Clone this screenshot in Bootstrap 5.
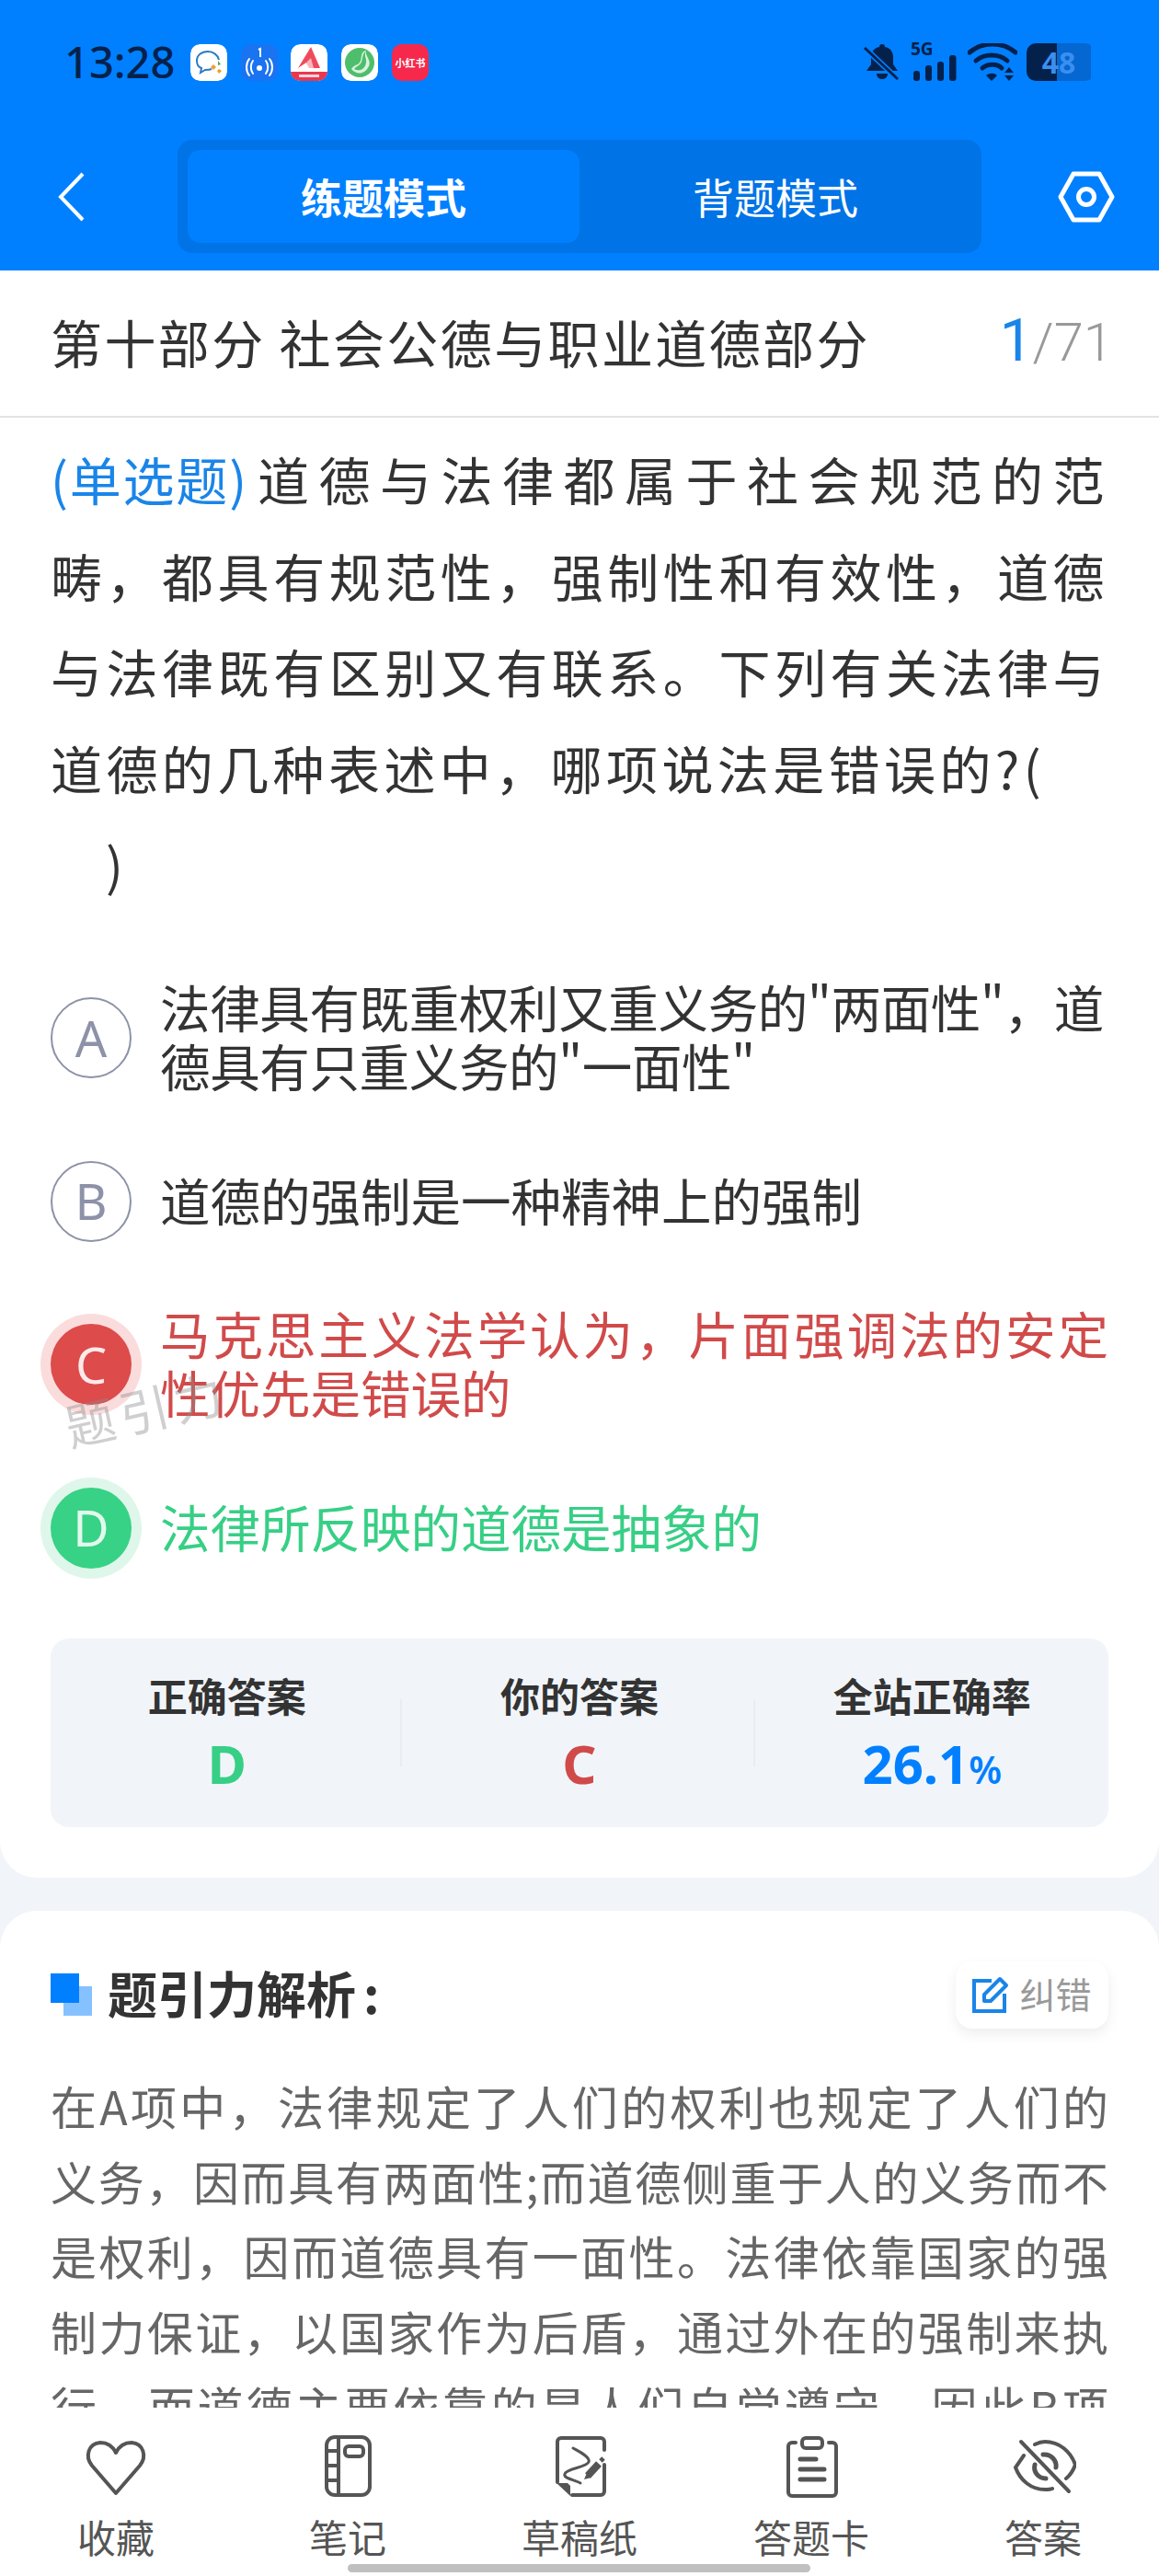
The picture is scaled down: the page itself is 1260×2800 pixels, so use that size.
<!DOCTYPE html>
<html lang="zh-CN">
<head>
  <meta charset="UTF-8">
  <title>题引力</title>
  <link href="https://cdn.jsdelivr.net/npm/bootstrap@5.3.3/dist/css/bootstrap.min.css" rel="stylesheet">
  <style>
    body {
      width: 1260px;
      height: 2800px;
      overflow: hidden;
      background-color: #f1f5f9;
      color: #333;
      font-family: "Noto Sans CJK SC", "Noto Sans", sans-serif;
    }
    .page { height: 2800px; }
    .top-blue { background-color: #0080ff; height: 294px; padding-top: 47px; }
    .status-row { height: 41px; padding: 0 70px 0 70px; }
    .clock { font-family: "Noto Sans", sans-serif; font-size: 47px; font-weight: 500; line-height: 41px; color: #04214c; width: 137px; }
    .app-ico { width: 40px; height: 40px; border-radius: 10px; display: block; margin-right: 14.7px; flex: none; }
    .mode-row { margin-top: 64px; }
    .back-box { width: 193px; padding-left: 62px; }
    .mode-switch { width: 874px; height: 123px; padding: 11px; background-color: #0073e6; border-radius: 16px; }
    .mode-item { width: 426px; border-radius: 14px; color: #fff; font-size: 45px; line-height: 101px; text-align: center; }
    .mode-active { background-color: #0080ff; font-weight: 700; }
    .mode-other { flex: 1; }
    .gear-box { width: 193px; padding-left: 83px; }
    .title-row { height: 160px; background: #fff; border-bottom: 2px solid #e3e3e3; padding: 0 50px 0 55px; }
    .title-text { font-size: 56px; letter-spacing: 2.4px; color: #333; line-height: 1; margin-top: -5px; }
    .progress-num { font-family: Roboto, sans-serif; font-weight: 300; color: #999; font-size: 58px; line-height: 1; margin-top: -5px; }
    .progress-num b { font-weight: 400; color: #1a85e8; font-size: 64px; }
    .first-card { background: #fff; border-radius: 0 0 40px 40px; padding: 14px 55px 55px; }
    .q-line { font-size: 56px; line-height: 104.6px; letter-spacing: 4.4px; color: #333; white-space: nowrap; }
    .q-just { text-align: justify; text-align-last: justify; }
    .q-type { color: #1a85e8; letter-spacing: 1.8px; display: inline-block; margin-right: 4px; }
    .q-pad { padding-left: 60px; height: 106px; line-height: 106px; }
    .opt-list { margin-top: 70px; gap: 69.5px; }
    .opt-row { min-height: 88px; gap: 31px; }
    .opt-dot { width: 88px; height: 88px; margin-top: 2px; margin-bottom: -2px; border-radius: 50%; flex: none; border: 2px solid #8d92a8; color: #8d92a8; font-family: "Noto Sans", sans-serif; font-size: 54px; }
    .opt-wrong { background: #dd4b4b; border: 0; color: #fde9e9; box-shadow: 0 0 0 11px #fbdcdc; }
    .opt-right { background: #37d285; border: 0; color: #e2f9ee; box-shadow: 0 0 0 11px #dff7ea; }
    .opt-text { font-size: 54.5px; line-height: 64px; width: 1031px; white-space: nowrap; color: #333; }
    .opt-tight { letter-spacing: -0.35px; }
    .opt-text-red { color: #d14a4a; }
    .opt-text-green { color: #37cf85; }
    .wm-text { position: absolute; left: 14px; top: 86px; font-size: 54px; line-height: 1; letter-spacing: 6px; color: rgba(140,140,140,.42); transform: rotate(-13deg); white-space: nowrap; pointer-events: none; }
    .stat-box { margin-top: 78px; height: 205px; background: #f1f5f9; border-radius: 20px; padding-top: 36px; }
    .stat-col { flex: 1; position: relative; }
    .stat-col + .stat-col::before { content: ""; position: absolute; left: -3px; top: 30px; height: 73px; border-left: 2px solid #e8edf2; }
    .stat-label { font-size: 43px; font-weight: 700; line-height: 50px; color: #333; }
    .stat-val { font-family: "Noto Sans", sans-serif; font-size: 58px; font-weight: 700; line-height: 72px; margin-top: 14px; }
    .stat-val small { font-size: 41px; font-weight: 600; }
    .second-card { margin-top: 36px; background: #fff; border-radius: 40px 40px 0 0; padding: 55px 55px 0; flex: 1; overflow: hidden; }
    .sq-ico { width: 45px; height: 46px; flex: none; margin-right: 17px; }
    .sec-title { font-size: 54px; font-weight: 700; line-height: 73px; color: #333; margin-top: -5px; }
    .sec-colon { margin-left: 8px; }
    .fix-btn { width: 166px; height: 73px; border-radius: 18px; background: #fff; box-shadow: 0 6px 14px rgba(0,0,0,.07); color: #999; font-size: 39px; gap: 11px; }
    .fix-btn span { margin-top: -4px; }
    .ana-text { margin-top: 43px; color: #666; font-size: 50px; line-height: 81.8px; }
    .ana-line { white-space: nowrap; text-align: justify; text-align-last: justify; }
    .bottom-tabs { height: 183px; background: #fff; position: relative; padding-top: 28px; }
    .tab-item { width: 252px; }
    .tab-item svg { display: block; }
    .tab-name { font-size: 42px; line-height: 50px; margin-top: 15px; color: #555; }
    .home-bar { position: absolute; left: 378px; top: 170px; width: 503px; height: 9px; border-radius: 5px; background: #c0c0c0; }
  </style>
</head>
<body>
<div class="page d-flex flex-column">
  <div class="top-blue flex-shrink-0">
    <div class="status-row d-flex align-items-center">
      <div class="clock">13:28</div>
      <svg class="app-ico" viewBox="0 0 40 40"><rect width="40" height="40" rx="10" fill="#fff"/><path d="M19 8c-7 0-12 4-12 10 0 4 2 7 5 8l-1 5 5-3c2 0 5 0 7-1" fill="none" stroke="#2b7bc8" stroke-width="2"/><path d="M19 8c6 0 11 4 12 9" fill="none" stroke="#2b7bc8" stroke-width="2"/><path d="M30 18l3 4-3 1z" fill="#4aa84f"/><path d="M25 22l3 3-3 3-3-3z" fill="#f0a030"/><path d="M31 27l3 2-3 3-2-3z" fill="#e8a020"/></svg>
      <svg class="app-ico" viewBox="0 0 40 40"><rect width="40" height="40" rx="10" fill="#1a73f0"/><path d="M19 6l2-1v9" fill="none" stroke="#fff" stroke-width="2"/><circle cx="20" cy="26" r="3" fill="#fff"/><path d="M13 19c-3 4-3 10 0 14M27 19c3 4 3 10 0 14M9 17c-4 5-4 13 0 18M31 17c4 5 4 13 0 18" fill="none" stroke="#fff" stroke-width="2" stroke-linecap="round" transform="translate(0 -1)"/></svg>
      <svg class="app-ico" viewBox="0 0 40 40"><rect width="40" height="40" rx="10" fill="#fff"/><path d="M0 30h40v1a9 9 0 0 1-9 9H9a9 9 0 0 1-9-9z" fill="#e8384f"/><path d="M22 3L8 26l9-6 4 6h11z" fill="#ef4a5c"/><path d="M17 20l5-5 3 11h-5z" fill="#f9b4bc"/><rect x="9" y="33" width="22" height="3" fill="#fbd4da"/></svg>
      <svg class="app-ico" viewBox="0 0 40 40"><rect width="40" height="40" rx="10" fill="#fff"/><circle cx="20" cy="20" r="16" fill="#4fbe6c"/><path d="M27 7c-7 1-4 9-7 13-2 3-6 2-9 7 5 6 14 7 19-3 3-7-4-10-3-17z" fill="#d8f3df"/><path d="M27 8c-5 2-3 9-6 13-2 3-5 3-7 6 5 3 12 1 13-7 1-5-3-7 0-12z" fill="#4fbe6c"/></svg>
      <svg class="app-ico" viewBox="0 0 40 40"><rect width="40" height="40" rx="10" fill="#f6294c"/><text x="20" y="25" text-anchor="middle" font-size="11" font-weight="700" fill="#fff" font-family="Noto Sans CJK SC">小红书</text></svg>
      <div class="ms-auto d-flex align-items-center">
        <svg width="40" height="41" viewBox="0 0 40 41"><path d="M20 1c2 0 3 1 3 3 6 1 9 6 9 11v8l5 7H3l5-7v-8c0-5 3-10 9-11 0-2 1-3 3-3z" fill="#04214c"/><path d="M14 33h12c0 4-3 6-6 6s-6-2-6-6z" fill="#04214c"/><path d="M1 5l36 34" stroke="#0080ff" stroke-width="6"/><path d="M1 5l36 34" stroke="#04214c" stroke-width="3"/></svg>
        <div class="position-relative" style="width:52px;height:41px;margin-left:11px"><span class="position-absolute fw-bold" style="left:0;top:-6px;font:700 19px/24px 'Noto Sans',sans-serif;color:#04214c">5G</span><svg class="position-absolute" style="left:2px;top:0" width="48" height="41" viewBox="0 0 48 41"><rect x="1" y="30" width="7" height="11" rx="3" fill="#04214c"/><rect x="14" y="24" width="7" height="17" rx="3" fill="#04214c"/><rect x="27" y="20" width="7" height="21" rx="3" fill="#04214c"/><rect x="40" y="13" width="7.500" height="28" rx="3" fill="#04214c"/></svg></div>
        <svg width="54" height="41" viewBox="0 0 54 41" style="margin-left:10px"><path d="M2 11c14-12 36-12 50 0" fill="none" stroke="#04214c" stroke-width="5" stroke-linecap="round" transform="translate(0 -1)"/><path d="M9 19c9-8 25-8 34 0" fill="none" stroke="#04214c" stroke-width="5" stroke-linecap="round"/><path d="M16 27c6-5 16-5 21 0" fill="none" stroke="#04214c" stroke-width="5" stroke-linecap="round"/><path d="M20 35c4-3 9-3 12 0l-6 6z" fill="#04214c"/><path d="M45 26l5 6H40zM45 41l-5-6h10z" fill="#04214c"/></svg>
        <div class="position-relative d-flex align-items-center justify-content-center" style="width:74px;height:41px;margin-left:10px;color:#3a8ff0;font:700 32px/41px 'Noto Sans',sans-serif;background:linear-gradient(90deg,#04214c 0,#04214c 33px,#0567d1 33px,#0567d1 70px,transparent 70px);border-radius:10px">
          <span style="margin-right:4px">48</span>
        </div>
      </div>
    </div>
    <div class="mode-row d-flex align-items-center">
      <div class="back-box"><svg width="32" height="54" viewBox="0 0 32 54"><path d="M28 2L4 27l24 25" fill="none" stroke="#fff" stroke-width="4"/></svg></div>
      <div class="mode-switch d-flex">
        <div class="mode-item mode-active">练题模式</div>
        <div class="mode-item mode-other">背题模式</div>
      </div>
      <div class="gear-box"><svg width="62" height="56" viewBox="0 0 62 56"><path d="M17 3h28l14 25-14 25H17L3 28z" fill="none" stroke="#fff" stroke-width="5" stroke-linejoin="round"/><circle cx="31" cy="28" r="8.500" fill="none" stroke="#fff" stroke-width="5"/></svg></div>
    </div>
  </div>

  <div class="title-row d-flex align-items-center justify-content-between flex-shrink-0">
    <div class="title-text">第十部分 社会公德与职业道德部分</div>
    <div class="progress-num"><b>1</b>/71</div>
  </div>

  <div class="first-card flex-shrink-0">
    <div class="q-line q-just"><span class="q-type">(单选题)</span>道德与法律都属于社会规范的范</div>
    <div class="q-line q-just">畴，都具有规范性，强制性和有效性，道德</div>
    <div class="q-line q-just">与法律既有区别又有联系。下列有关法律与</div>
    <div class="q-line">道德的几种表述中，哪项说法是错误的?(</div>
    <div class="q-line q-pad">)</div>

    <div class="opt-list d-flex flex-column">
      <div class="opt-row d-flex align-items-center">
        <div class="opt-dot d-flex align-items-center justify-content-center">A</div>
        <div class="opt-text opt-tight"><div>法律具有既重权利又重义务的"两面性"，道</div><div>德具有只重义务的"一面性"</div></div>
      </div>
      <div class="opt-row d-flex align-items-center">
        <div class="opt-dot d-flex align-items-center justify-content-center">B</div>
        <div class="opt-text">道德的强制是一种精神上的强制</div>
      </div>
      <div class="opt-row d-flex align-items-center position-relative">
        <div class="opt-dot opt-wrong d-flex align-items-center justify-content-center">C</div>
        <div class="opt-text opt-text-red"><div class="q-just">马克思主义法学认为，片面强调法的安定</div><div>性优先是错误的</div></div>
        <div class="wm-text">题引力</div>
      </div>
      <div class="opt-row d-flex align-items-center">
        <div class="opt-dot opt-right d-flex align-items-center justify-content-center">D</div>
        <div class="opt-text opt-text-green">法律所反映的道德是抽象的</div>
      </div>
    </div>

    <div class="stat-box d-flex text-center">
      <div class="stat-col">
        <div class="stat-label">正确答案</div>
        <div class="stat-val opt-text-green">D</div>
      </div>
      <div class="stat-col">
        <div class="stat-label">你的答案</div>
        <div class="stat-val opt-text-red">C</div>
      </div>
      <div class="stat-col">
        <div class="stat-label">全站正确率</div>
        <div class="stat-val" style="color:#0080ff">26.1<small>%</small></div>
      </div>
    </div>
  </div>

  <div class="second-card">
    <div class="d-flex align-items-center justify-content-between">
      <div class="d-flex align-items-center">
        <svg class="sq-ico" viewBox="0 0 45 46"><rect x="14" y="14" width="31" height="32" fill="#86c1ff"/><rect width="31" height="32" fill="#0080ff"/></svg>
        <div class="sec-title">题引力解析<span class="sec-colon">:</span></div>
      </div>
      <div class="fix-btn d-flex align-items-center justify-content-center">
        <svg width="40" height="40" viewBox="0 0 40 40"><path d="M21 5H2v33h33V19" fill="none" stroke="#1a85e8" stroke-width="4"/><path d="M13 27V20L30 3l7 7-17 17z" fill="none" stroke="#1a85e8" stroke-width="4" stroke-linejoin="round"/></svg>
        <span>纠错</span>
      </div>
    </div>
    <div class="ana-text">
      <div class="ana-line">在A项中，法律规定了人们的权利也规定了人们的</div>
      <div class="ana-line">义务，因而具有两面性;而道德侧重于人的义务而不</div>
      <div class="ana-line">是权利，因而道德具有一面性。法律依靠国家的强</div>
      <div class="ana-line">制力保证，以国家作为后盾，通过外在的强制来执</div>
      <div class="ana-line">行，而道德主要依靠的是人们自觉遵守，因此B项</div>
    </div>
  </div>

  <div class="bottom-tabs d-flex flex-shrink-0">
    <div class="tab-item d-flex flex-column align-items-center">
      <svg width="72" height="72" viewBox="0 0 72 72" fill="none" stroke="#555" stroke-width="4" stroke-linejoin="round"><path d="M36 65L10 35C2 25 6 11 19 10c8 0 14 5 17 11 3-6 9-11 17-11 13 1 17 15 9 25z"/></svg>
      <div class="tab-name">收藏</div>
    </div>
    <div class="tab-item d-flex flex-column align-items-center">
      <svg width="72" height="72" viewBox="0 0 72 72" fill="none" stroke="#555" stroke-width="4"><rect x="13" y="4" width="47" height="63" rx="9"/><path d="M26 4v63M13 19h13M13 35h13M13 51h13"/><rect x="33" y="14" width="20" height="11" rx="4"/></svg>
      <div class="tab-name">笔记</div>
    </div>
    <div class="tab-item d-flex flex-column align-items-center">
      <svg width="72" height="72" viewBox="0 0 72 72" fill="none" stroke="#555" stroke-width="4" stroke-linecap="round"><path d="M12 53V9a4 4 0 0 1 4-4h43a4 4 0 0 1 4 4v9M63 34v29a4 4 0 0 1-4 4H28"/><path d="M11 54h12l3 3v11z" fill="#555" stroke="none"/><path d="M29 16c9 5 19 10 17 15-2 6-24 7-26 13-2 5 10 6 17 10" stroke-width="3"/><path d="M45 46l12-13" stroke-width="8" stroke-linecap="butt"/><path d="M41 50l3-7 5 5z" fill="#555" stroke="none"/><path d="M59 30l3-3" stroke-width="5" stroke-linecap="butt"/></svg>
      <div class="tab-name">草稿纸</div>
    </div>
    <div class="tab-item d-flex flex-column align-items-center">
      <svg width="72" height="72" viewBox="0 0 72 72" fill="none" stroke="#555" stroke-width="4" stroke-linecap="round"><path d="M19 10h-4a4 4 0 0 0-4 4v50a4 4 0 0 0 4 4h44a4 4 0 0 0 4-4V14a4 4 0 0 0-4-4h-4"/><rect x="26" y="5" width="22" height="11" rx="4"/><path d="M24 28h17M24 39h26M24 50h26" stroke-width="5"/></svg>
      <div class="tab-name">答题卡</div>
    </div>
    <div class="tab-item d-flex flex-column align-items-center">
      <svg width="72" height="72" viewBox="0 0 72 72" fill="none" stroke="#555" stroke-width="4" stroke-linecap="round"><path d="M15 24L6 37c5 14 17 24 32 24 3 0 6 0 8-1M27 12c4-2 7-3 11-3 16 0 28 11 33 25-2 6-5 11-10 15"/><path d="M12 9l52 54"/><path d="M36 23c9-1 15 7 14 14M27 34c-2 8 4 15 12 15" stroke-width="5"/></svg>
      <div class="tab-name">答案</div>
    </div>
    <div class="home-bar"></div>
  </div>
</div>
</body>
</html>
